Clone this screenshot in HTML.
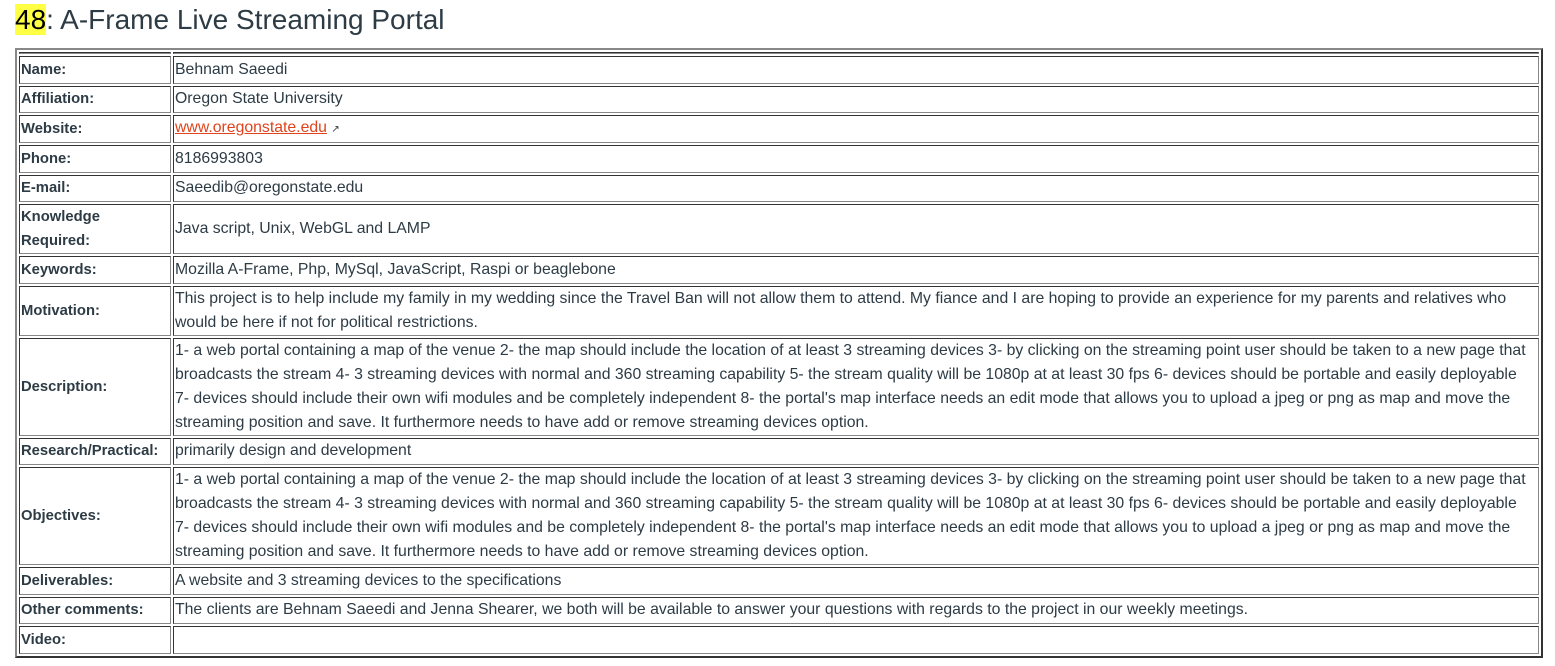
<!DOCTYPE html>
<html><head><meta charset="utf-8"><style>
body{margin:0;background:#fff;font-family:"Liberation Sans",sans-serif;color:#2d3b45;}
h2{margin:0;position:absolute;left:15px;top:3px;font-weight:normal;font-size:28px;line-height:34px;color:#2d3b45;}
h2 span{background:#ffff44;color:#000;}
table{position:absolute;left:15px;top:48px;width:1528px;border-collapse:separate;border-spacing:2px;border:2px solid;border-color:#888 #333 #333 #888;font-size:15.8px;line-height:24px;}
td{border:1px solid;border-color:#333 #888 #888 #333;padding:0 1px;height:25.5px;vertical-align:middle;}
td.l{width:148px;font-weight:bold;font-size:14.8px;}
tr.h td{height:0;padding:0;line-height:0;font-size:0;}
a{color:#e0431d;}
.nw{white-space:nowrap;}
</style></head><body>
<h2><span>48</span>: A-Frame Live Streaming Portal</h2>
<table>
<tr class="h"><td></td><td></td></tr>
<tr><td class="l">Name:</td><td>Behnam Saeedi</td></tr>
<tr><td class="l">Affiliation:</td><td>Oregon State University</td></tr>
<tr><td class="l">Website:</td><td><a href="#">www.oregonstate.edu</a> <span style="font-size:10px">&#x2197;</span></td></tr>
<tr><td class="l">Phone:</td><td>8186993803</td></tr>
<tr><td class="l">E-mail:</td><td>Saeedib@oregonstate.edu</td></tr>
<tr><td class="l">Knowledge<br>Required:</td><td>Java script, Unix, WebGL and LAMP</td></tr>
<tr><td class="l">Keywords:</td><td>Mozilla A-Frame, Php, MySql, JavaScript, Raspi or beaglebone</td></tr>
<tr><td class="l">Motivation:</td><td class="nw">This project is to help include my family in my wedding since the Travel Ban will not allow them to attend. My fiance and I are hoping to provide an experience for my parents and relatives who<br>would be here if not for political restrictions.</td></tr>
<tr><td class="l">Description:</td><td class="nw">1- a web portal containing a map of the venue 2- the map should include the location of at least 3 streaming devices 3- by clicking on the streaming point user should be taken to a new page that<br>broadcasts the stream 4- 3 streaming devices with normal and 360 streaming capability 5- the stream quality will be 1080p at at least 30 fps 6- devices should be portable and easily deployable<br>7- devices should include their own wifi modules and be completely independent 8- the portal's map interface needs an edit mode that allows you to upload a jpeg or png as map and move the<br>streaming position and save. It furthermore needs to have add or remove streaming devices option.</td></tr>
<tr><td class="l">Research/Practical:</td><td>primarily design and development</td></tr>
<tr><td class="l">Objectives:</td><td class="nw">1- a web portal containing a map of the venue 2- the map should include the location of at least 3 streaming devices 3- by clicking on the streaming point user should be taken to a new page that<br>broadcasts the stream 4- 3 streaming devices with normal and 360 streaming capability 5- the stream quality will be 1080p at at least 30 fps 6- devices should be portable and easily deployable<br>7- devices should include their own wifi modules and be completely independent 8- the portal's map interface needs an edit mode that allows you to upload a jpeg or png as map and move the<br>streaming position and save. It furthermore needs to have add or remove streaming devices option.</td></tr>
<tr><td class="l">Deliverables:</td><td>A website and 3 streaming devices to the specifications</td></tr>
<tr><td class="l">Other comments:</td><td>The clients are Behnam Saeedi and Jenna Shearer, we both will be available to answer your questions with regards to the project in our weekly meetings.</td></tr>
<tr><td class="l">Video:</td><td></td></tr>
</table>
</body></html>
